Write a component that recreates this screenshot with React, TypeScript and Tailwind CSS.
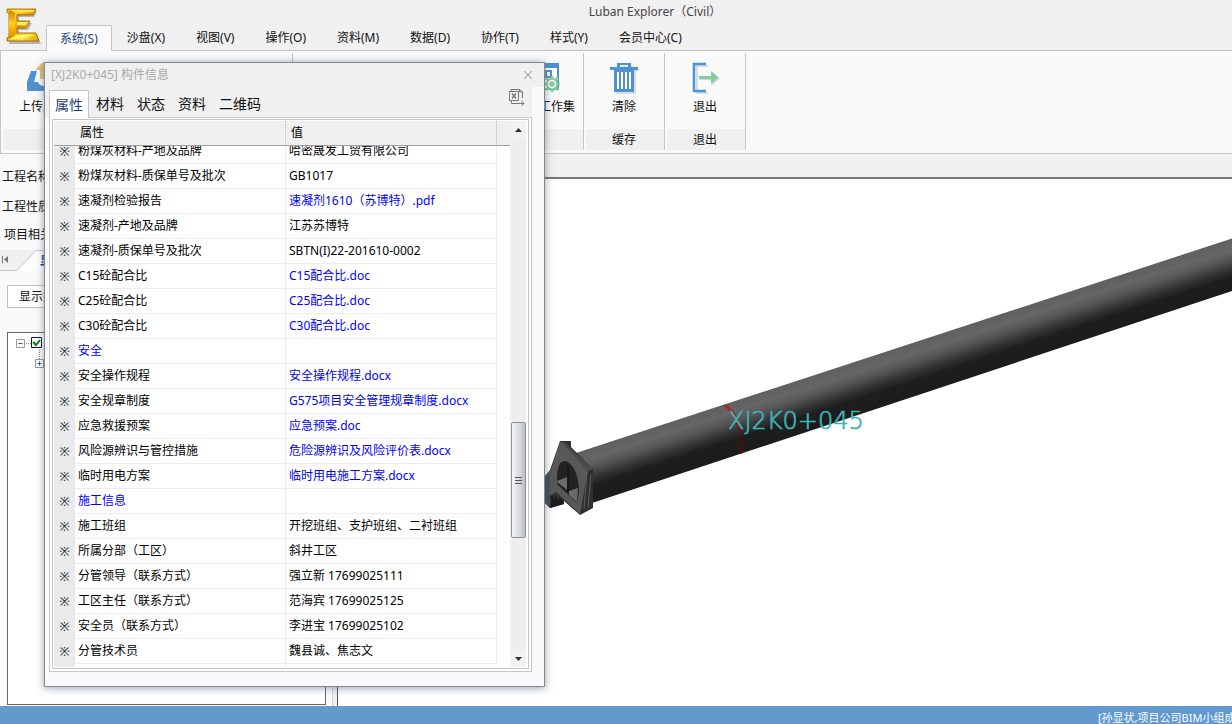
import { useLayoutEffect, useRef, useState } from 'react';

const menus = ['系统(S)', '沙盘(X)', '视图(V)', '操作(O)', '资料(M)', '数据(D)', '协作(T)', '样式(Y)', '会员中心(C)'];
const dialogTabs = ['属性', '材料', '状态', '资料', '二维码'];

type Row = { name: string; value?: string; link?: boolean; group?: boolean };

const rows: Row[] = [
  { name: '粉煤灰材料-产地及品牌', value: '哈密晟发工贸有限公司' },
  { name: '粉煤灰材料-质保单号及批次', value: 'GB1017' },
  { name: '速凝剂检验报告', value: '速凝剂1610（苏博特）.pdf', link: true },
  { name: '速凝剂-产地及品牌', value: '江苏苏博特' },
  { name: '速凝剂-质保单号及批次', value: 'SBTN(I)22-201610-0002' },
  { name: 'C15砼配合比', value: 'C15配合比.doc', link: true },
  { name: 'C25砼配合比', value: 'C25配合比.doc', link: true },
  { name: 'C30砼配合比', value: 'C30配合比.doc', link: true },
  { name: '安全', group: true },
  { name: '安全操作规程', value: '安全操作规程.docx', link: true },
  { name: '安全规章制度', value: 'G575项目安全管理规章制度.docx', link: true },
  { name: '应急救援预案', value: '应急预案.doc', link: true },
  { name: '风险源辨识与管控措施', value: '危险源辨识及风险评价表.docx', link: true },
  { name: '临时用电方案', value: '临时用电施工方案.docx', link: true },
  { name: '施工信息', group: true },
  { name: '施工班组', value: '开挖班组、支护班组、二衬班组' },
  { name: '所属分部（工区）', value: '斜井工区' },
  { name: '分管领导（联系方式）', value: '强立新 17699025111' },
  { name: '工区主任（联系方式）', value: '范海宾 17699025125' },
  { name: '安全员（联系方式）', value: '李进宝 17699025102' },
  { name: '分管技术员', value: '魏县诚、焦志文' },
];

function Logo() {
  return (
    <svg width="38" height="38" viewBox="0 0 38 38" aria-hidden="true">
      <defs>
        <linearGradient id="gold" x1="0" y1="0" x2="1" y2="1">
          <stop offset="0" stopColor="#ffb400" />
          <stop offset="0.25" stopColor="#ffd21f" />
          <stop offset="0.45" stopColor="#f0a000" />
          <stop offset="0.7" stopColor="#ffe52e" />
          <stop offset="1" stopColor="#e29a00" />
        </linearGradient>
        <linearGradient id="goldStem" x1="0" y1="0" x2="0" y2="1">
          <stop offset="0" stopColor="#c97a00" />
          <stop offset="0.45" stopColor="#ffcf20" />
          <stop offset="0.6" stopColor="#ffb800" />
          <stop offset="1" stopColor="#d08200" />
        </linearGradient>
      </defs>
      <path d="M3 3H31L28 9H13V15H26L22 22H13V27H31L35 36H3V32L5 29V8Z" fill="#777" opacity="0.5" />
      <path d="M1 1H30L27 7H11V13H24L20 20H11V25H30L33 33H1V30L3 28V6L1 4Z" fill="url(#gold)" stroke="#9a5c00" strokeWidth="0.800" />
      <path d="M3 2L9 5V28L3 32V28V6Z" fill="url(#goldStem)" />
      <path d="M4 2H29L27 4H9Z" fill="#ffe24a" />
      <path d="M11 14L22 14L19 17H11Z" fill="#fff06a" />
      <path d="M2 32L10 27H28L18 30Z" fill="#fff36b" />
      <path d="M11 19H20M11 6.500H27" stroke="#b87000" strokeWidth="0.800" />
    </svg>
  );
}

function UploadIcon() {
  return (
    <svg width="34" height="32" viewBox="0 0 34 32" aria-hidden="true">
      <path d="M5 9H11L8 20H12C13 25 21 25 22 20H26L23 9H29L33 20V29H1V20Z" fill="#4f92cf" />
      <path d="M17 0L25 8H20V17H14V8H9Z" fill="#e0c07c" />
    </svg>
  );
}

function WorksetIcon() {
  return (
    <svg width="32" height="32" viewBox="0 0 32 32" aria-hidden="true">
      <path d="M1 2H29V27H1Z" fill="#fff" stroke="#4f92cf" strokeWidth="2" />
      <path d="M1 1H30V6H1Z" fill="#4f92cf" />
      <path d="M17 9H22V15H17ZM7 9H13V15H7Z" fill="none" stroke="#4f92cf" strokeWidth="2" />
      <g transform="translate(23 22)">
        <circle r="6" fill="#84cc9c" />
        <path d="M0-8V8M-8 0H8M-6-6L6 6M6-6L-6 6" stroke="#84cc9c" strokeWidth="3" />
        <circle r="3.500" fill="#84cc9c" stroke="#fff" strokeWidth="1.500" />
      </g>
    </svg>
  );
}

function TrashIcon() {
  return (
    <svg width="30" height="32" viewBox="0 0 30 32" aria-hidden="true">
      <path d="M10 4H24V7H30V9H27V32H7V9H10Z" fill="#d9dce6" />
      <path d="M8 5V1H22V5H29V8H25V30H5V8H1V5ZM11 5H19V3H11Z" fill="#4f92cf" fillRule="evenodd" />
      <path d="M9 10V27M13 10V27M17 10V27M21 10V27" stroke="#fff" strokeWidth="2" />
    </svg>
  );
}

function ExitIcon() {
  return (
    <svg width="30" height="32" viewBox="0 0 30 32" aria-hidden="true">
      <path d="M18 4H7V31H18" fill="none" stroke="#d4dcea" strokeWidth="2" />
      <path d="M16 2H4V29H16" fill="none" stroke="#4f92cf" strokeWidth="2.500" />
      <path d="M10 15H22V10L30 16.500L22 23V18H10Z" fill="#cdd4e4" />
      <path d="M9 14H21V9L28 15.500L21 22V17H9Z" fill="#84cc9c" />
    </svg>
  );
}

function ExportIcon() {
  return (
    <svg width="18" height="18" viewBox="0 0 18 18" fill="none" stroke="#777" aria-hidden="true">
      <path d="M3 3.500V1.500H11.500L14.500 4V10M3.500 13V15.500H16M13.500 13L16 15.500L13.500 17.500M11.500 1.500V4H14.500" />
      <path d="M1.500 3.500H10.500V12.500H1.500Z" fill="#f0f0f0" />
      <path d="M4 5.500L8 10.500M8 5.500L4 10.500" strokeWidth="1.500" />
    </svg>
  );
}

function RibbonGroup({ label, className, children }: { label: string; className: string; children: React.ReactNode }) {
  return (
    <div className={`flex shrink-0 flex-col border-r border-[#c6c6c6] ${className}`}>
      <div className="flex flex-1 items-start">{children}</div>
      <div className="ml-[2px] flex h-[21px] items-center justify-center bg-[#f0f0f0] pr-[2px]">{label}</div>
    </div>
  );
}

function RibbonButton({ label, className, children }: { label: string; className: string; children: React.ReactNode }) {
  return (
    <button className={`flex flex-col items-center gap-1 pt-[9px] leading-[18px] ${className}`}>
      {children}
      <span>{label}</span>
    </button>
  );
}

function Scene() {
  return (
    <svg width="894" height="527" viewBox="338 179 894 527" className="block shrink-0" role="img" aria-label="XJ2K0+045">
      <defs>
        <linearGradient id="tube" gradientUnits="userSpaceOnUse" x1="723" y1="405" x2="739" y2="454">
          <stop offset="0" stopColor="#606060" />
          <stop offset="0.2" stopColor="#666" />
          <stop offset="0.36" stopColor="#565656" />
          <stop offset="0.54" stopColor="#353535" />
          <stop offset="0.7" stopColor="#1e1e1e" />
          <stop offset="1" stopColor="#1c1c1c" />
        </linearGradient>
        <linearGradient id="ring" x1="0" y1="0" x2="0" y2="1">
          <stop offset="0" stopColor="#b02a2a" />
          <stop offset="0.4" stopColor="#7a2020" />
          <stop offset="0.7" stopColor="#3a1212" />
          <stop offset="1" stopColor="#481010" />
        </linearGradient>
      </defs>
      <path d="M576 453L1232 238.500V291L592 503Z" fill="url(#tube)" />
      <path d="M722 405.500L726 404.500C738 411 743 430 743 453L740 454C741 432 735 412 722 405.500Z" fill="url(#ring)" />
      <path d="M560 441L571 441V447L593 469V508L580 515L564 501V504L550 508L545 503V476L550 470Z" fill="#303030" />
      <path d="M560 442L565 443L588 469L580 514L556 492L545 499V476L551 470Z" fill="#585858" />
      <path d="M545 476L550 474L549 494L552 506L550 508L545 503Z" fill="#444c56" />
      <path d="M557 481C557 468 559 461 565 461C574 463 579 478 579 491L577 503L557 484Z" fill="#222" />
      <path d="M557 481L567 477V490L557 482ZM569 491L578 488L577 502L569 495Z" fill="#6b6b6b" />
      <path d="M568 466V492" stroke="#151515" strokeWidth="1.500" />
      <path d="M551 495L555 500V496L559 501V497L564 502V504L550 508Z" fill="#1c1c1c" />
      <path d="M587 472L584 509M591 475L588 507" stroke="#777" strokeWidth="0.600" />
      <path d="M565 443L593 469L588 471L562 443Z" fill="#4a4a4a" />
      <text x="728" y="429" fill="#3db5b8" stroke="#3db5b8" strokeWidth="0.700" fontSize="24" fontFamily="'DejaVu Sans', sans-serif" fontWeight="200">XJ2K0+045</text>
    </svg>
  );
}

function PropertyDialog() {
  const [tab, setTab] = useState('属性');
  const scroller = useRef<HTMLDivElement>(null);
  useLayoutEffect(() => {
    if (scroller.current) scroller.current.scrollTop = 7;
  }, []);
  return (
    <section className="absolute left-[44px] top-[62px] flex h-[625px] w-[501px] flex-col border border-[#858789] bg-[#fafafa] shadow-[0_1px_8px_rgba(60,80,110,0.55)]">
      <header className="flex h-6 shrink-0 items-center justify-between bg-[#f0f0f0] pl-[6px] pr-3 text-[#aaa]">
        <h2>[XJ2K0+045] 构件信息</h2>
        <button aria-label="关闭">
          <svg width="8" height="8" viewBox="0 0 8 8" stroke="#aaa" strokeWidth="1.200"><path d="M0 0L8 8M8 0L0 8" /></svg>
        </button>
      </header>
      <div className="mr-3 flex h-[31px] shrink-0 items-end justify-between bg-[#f0f0f0] pl-1">
        <div role="tablist" className="flex gap-px text-sm leading-[28px]">
          {dialogTabs.map((t) => (
            <button
              key={t}
              role="tab"
              aria-selected={t === tab}
              onClick={() => setTab(t)}
              className={t === tab ? 'relative z-10 h-[28px] border border-b-0 border-[#c6c6c6] bg-white px-[5px] leading-[27px] text-[#1f3f7a]' : 'h-[28px] px-[6px]'}
            >
              {t}
            </button>
          ))}
        </div>
        <button aria-label="导出Excel" className="mb-3 mr-[6px]"><ExportIcon /></button>
      </div>
      <div className="-mt-px mb-[14px] ml-1 mr-3 flex min-h-0 flex-1 border border-[#c6c6c6] bg-white p-[2px] pt-px">
        <div className="flex min-w-0 flex-1 border border-[#c6c6c6] p-px">
          <div ref={scroller} className="min-w-0 flex-1 overflow-hidden">
            <table className="w-full table-fixed border-separate border-spacing-0 text-left text-black">
              <colgroup>
                <col className="w-[21px]" />
                <col className="w-[211px]" />
                <col className="w-[211px]" />
                <col />
              </colgroup>
              <thead className="sticky top-0">
                <tr className="h-[25px] bg-[#f0f0f0]">
                  <th className="border-b border-[#a0a0a0]" />
                  <th className="border-b border-r border-b-[#a0a0a0] border-r-[#d0d0d0] pl-[5px] font-normal">属性</th>
                  <th className="border-b border-r border-b-[#a0a0a0] border-r-[#d0d0d0] pl-[5px] font-normal">值</th>
                  <th className="border-b border-[#a0a0a0]" />
                </tr>
              </thead>
              <tbody>
                {rows.map((r) => (
                  <tr key={r.name} className="h-[25px]">
                    <td className="bg-[#e8eaec] text-center text-[#222]">※</td>
                    <td className={`border-b border-r border-[#ececec] pl-[3px] ${r.group ? 'text-[#0000ff]' : ''}`}>{r.name}</td>
                    <td className="whitespace-nowrap border-b border-r border-[#ececec] pl-[3px]">
                      {r.link ? <a href="#" className="text-[#0000ff]">{r.value}</a> : r.value}
                    </td>
                    <td />
                  </tr>
                ))}
                <tr className="h-[25px]">
                  <td className="bg-[#e8eaec]" />
                  <td className="border-r border-[#ececec]" />
                  <td />
                  <td />
                </tr>
              </tbody>
            </table>
          </div>
          <div className="mr-px flex w-4 shrink-0 flex-col items-center bg-[#eee]">
            <button aria-label="向上" className="flex h-[17px] w-full items-center justify-center bg-[#f2f2f2]">
              <svg width="7" height="4" viewBox="0 0 7 4"><path d="M0 4L3.500 0L7 4Z" fill="#333" /></svg>
            </button>
            <div className="flex-[284]" />
            <div className="flex h-[116px] w-[15px] flex-col items-center justify-center gap-[2px] rounded-[2px] border border-[#8c8f94] bg-linear-to-r from-[#f4f5f6] via-[#dcdee2] to-[#b9bec6]">
              <span className="h-px w-[7px] bg-[#555]" />
              <span className="h-px w-[7px] bg-[#555]" />
              <span className="h-px w-[7px] bg-[#555]" />
            </div>
            <div className="flex-[112]" />
            <button aria-label="向下" className="flex h-[17px] w-full items-center justify-center bg-[#f2f2f2]">
              <svg width="7" height="4" viewBox="0 0 7 4"><path d="M0 0L3.500 4L7 0Z" fill="#333" /></svg>
            </button>
          </div>
        </div>
      </div>
    </section>
  );
}

export default function App() {
  const [menu, setMenu] = useState('系统(S)');
  return (
    <div className="relative flex h-screen flex-col overflow-hidden bg-[#f0f0f0] font-['Noto_Sans','Noto_Sans_CJK_SC',sans-serif] text-xs text-[#111]">
      <header className="flex h-[51px] shrink-0">
        <div className="flex w-[46px] shrink-0 items-start pl-[6px] pt-2"><Logo /></div>
        <div className="flex min-w-0 flex-1 flex-col">
          <h1 className="flex h-[26px] items-center justify-center pb-[2px] pl-8 text-[#444]">Luban Explorer（Civil）</h1>
          <nav className="flex gap-[3px]">
            {menus.map((m) => (
              <button
                key={m}
                onClick={() => setMenu(m)}
                className={m === menu ? 'relative z-10 -mr-[2px] h-[26px] whitespace-nowrap border border-b-0 border-[#c6c6c6] bg-[#fafafa] px-[13px] text-[#1f3f7a]' : 'h-[25px] whitespace-nowrap px-[14px]'}
              >
                {m}
              </button>
            ))}
          </nav>
        </div>
      </header>
      <div className="-mt-px flex h-[104px] shrink-0 border border-r-0 border-[#c6c6c6] bg-[#fafafa] pb-[3px] pt-[2px]">
        <RibbonGroup label="" className="w-[292px]">
          <RibbonButton label="上传工程" className="ml-[18px]"><UploadIcon /></RibbonButton>
        </RibbonGroup>
        <RibbonGroup label="" className="w-[291px]">
          <RibbonButton label="保存工作集" className="ml-auto mr-2"><WorksetIcon /></RibbonButton>
        </RibbonGroup>
        <RibbonGroup label="缓存" className="w-[81px]">
          <RibbonButton label="清除" className="w-full"><TrashIcon /></RibbonButton>
        </RibbonGroup>
        <RibbonGroup label="退出" className="w-[81px]">
          <RibbonButton label="退出" className="w-full"><ExitIcon /></RibbonButton>
        </RibbonGroup>
      </div>
      <div className="flex min-h-0 flex-1">
        <aside className="flex w-[333px] shrink-0 flex-col border-r border-[#d0d0d0] bg-[#fafafa]">
          <div className="flex h-24 flex-col gap-3 pl-[2px] pt-[14px] leading-[18px]">
            <p>工程名称：</p>
            <p>工程性质：</p>
            <p className="-mt-[2px] pl-[2px]">项目相关：</p>
          </div>
          <div className="flex h-[21px] shrink-0 items-center bg-[#f0f0f0]">
            <svg width="38" height="21" viewBox="0 0 38 21" aria-hidden="true">
              <path d="M17 20.500L36 .5H38V21H17Z" fill="#fff" />
              <path d="M0 20.500H17L36 .5H38" fill="none" stroke="#c6c6c6" />
              <path d="M2.500 6V13" stroke="#777" />
              <path d="M8 6V13L4 9.500Z" fill="#777" />
            </svg>
            <span className="flex h-full flex-1 items-center border-t border-[#c6c6c6] bg-white pl-[2px] font-bold text-[#1f3f9a]">显示</span>
          </div>
          <button className="ml-[7px] mt-[14px] h-[23px] w-24 shrink-0 border border-[#c0c0c0] bg-white pl-[11px] text-left">显示控制</button>
          <div className="mb-px ml-[7px] mr-[6px] mt-[24px] min-h-0 flex-1 border border-[#666] bg-white pl-2 pt-1">
            <svg width="36" height="32" viewBox="0 0 36 32" fill="none" aria-hidden="true">
              <path d="M.5 2.500H8.500V10.500H.5ZM19.500 22.500H27.500V30.500H19.500Z" fill="#fff" stroke="#999" />
              <path d="M2.500 6.500H6.500M21.500 26.500H25.500M23.500 24.500V28.500" stroke="#345a9a" />
              <path d="M10 6.500H15M23.500 13V22" stroke="#888" strokeDasharray="1 1" />
              <path d="M15.500 .5H25.500V10.500H15.500Z" fill="#fff" stroke="#111155" />
              <path d="M17 5L20 8L24 3" stroke="#008000" strokeWidth="2" />
            </svg>
          </div>
        </aside>
        <main className="flex min-w-0 flex-1 flex-col">
          <div className="h-[25px] shrink-0 border-b-2 border-[#777]" />
          <div className="ml-1 flex min-h-0 flex-1 overflow-hidden border-l border-[#555] bg-white">
            <Scene />
          </div>
        </main>
      </div>
      <footer className="flex h-[18px] shrink-0 items-start justify-end overflow-hidden bg-[#6299cf] text-white">
        <span className="-mr-[18px] whitespace-nowrap pt-[3px] text-[11px] leading-[18px]">[孙显状,项目公司BIM小组成员]</span>
      </footer>
      <PropertyDialog />
    </div>
  );
}
